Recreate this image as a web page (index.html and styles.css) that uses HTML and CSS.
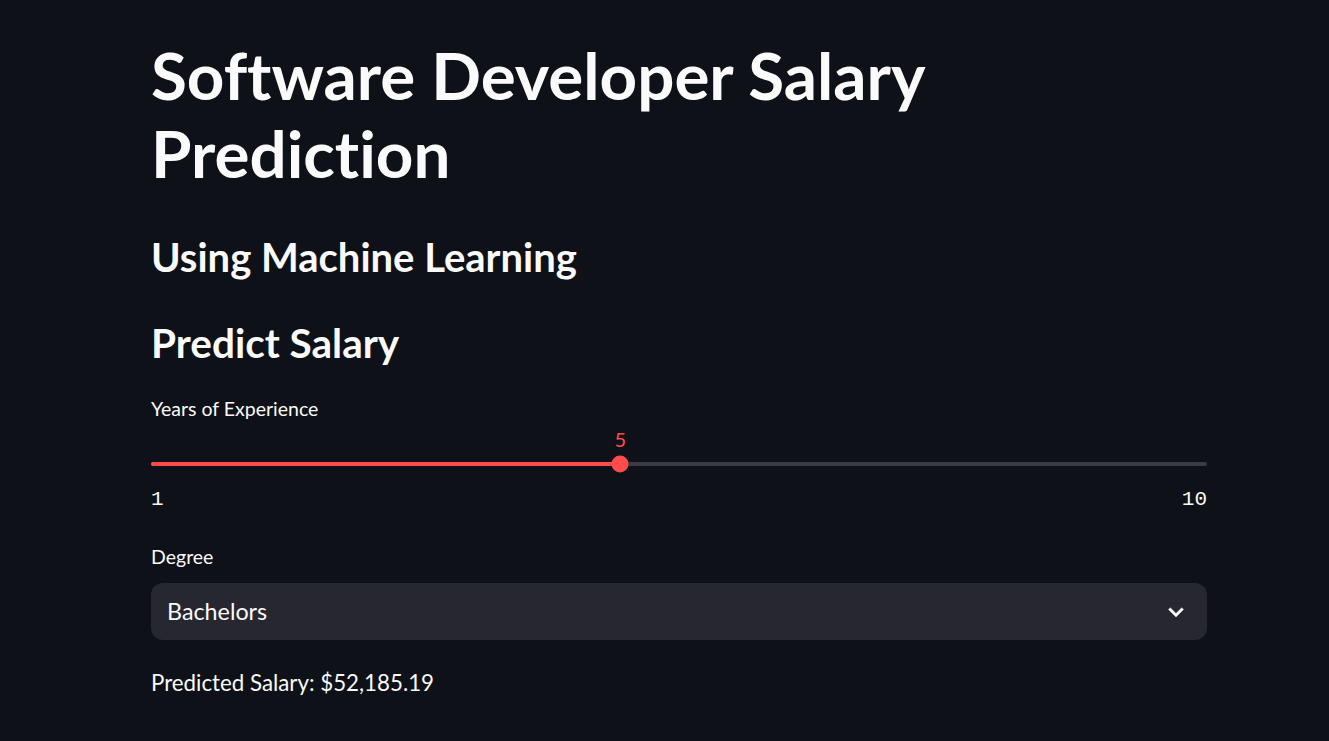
FILE: index.html
```html
<!DOCTYPE html>
<html lang="en">
<head>
<meta charset="utf-8">
<title>Software Developer Salary Prediction</title>
<link rel="stylesheet" href="styles.css">
</head>
<body>
<main class="main">
  <h1 class="title">Software Developer Salary<br>Prediction</h1>
  <h3 class="subtitle">Using Machine Learning</h3>
  <h3 class="section">Predict Salary</h3>

  <div class="widget-label">Years of Experience</div>
  <div class="slider">
    <div class="slider-value-row">
      <span class="slider-value" style="left: 44.444%">5</span>
    </div>
    <div class="slider-track-wrap">
      <div class="slider-track">
        <div class="slider-fill" style="width: 44.444%"></div>
      </div>
      <div class="slider-thumb" style="left: 44.444%"></div>
    </div>
    <div class="slider-ticks">
      <span>1</span>
      <span>10</span>
    </div>
  </div>

  <div class="widget-label degree-label">Degree</div>
  <div class="select">
    <span class="select-value">Bachelors</span>
    <svg class="select-chevron" viewBox="0 0 24 24" width="30" height="30" aria-hidden="true">
      <path d="M16.59 8.59L12 13.17 7.41 8.59 6 10l6 6 6-6z" fill="#fafafa" stroke="#fafafa" stroke-width="0.35" stroke-linejoin="round"/>
    </svg>
  </div>

  <p class="result">Predicted Salary: $52,185.19</p>
</main>
</body>
</html>
```
FILE: styles.css
```css
html, body {
  margin: 0;
  padding: 0;
  background: #0e1117;
}

body {
  color: #fafafa;
  font-family: Lato, "Noto Sans", sans-serif;
  font-variant-ligatures: none;
}

.main {
  width: 1056px;
  margin-left: 151px;
  padding-top: 36px;
}

.title {
  margin: 0;
  font-size: 65.5px;
  line-height: 78px;
  font-weight: 700;
}

.subtitle,
.section {
  margin: 0;
  font-size: 40px;
  line-height: 54px;
  font-weight: 700;
}

.subtitle {
  margin-top: 38px;
}

.section {
  margin-top: 32px;
  font-size: 40.5px;
}

.widget-label {
  margin-top: 24px;
  font-size: 19.5px;
  line-height: 30px;
}

.slider {
  position: relative;
}

.slider-value-row {
  position: relative;
  height: 30px;
}

.slider-value {
  position: absolute;
  top: 0;
  transform: translateX(-50%);
  color: #ff4b4b;
  font-size: 20px;
  line-height: 30px;
}

.slider-track-wrap {
  position: relative;
  height: 20px;
  display: flex;
  align-items: center;
}

.slider-track {
  width: 100%;
  height: 4px;
  border-radius: 2px;
  background: #3a3c45;
  overflow: hidden;
}

.slider-fill {
  height: 100%;
  background: #ff4b4b;
}

.slider-thumb {
  position: absolute;
  top: 50%;
  width: 17px;
  height: 17px;
  border-radius: 50%;
  background: #ff4b4b;
  transform: translate(-50%, -50%);
}

.slider-ticks {
  margin-top: 11px;
  display: flex;
  justify-content: space-between;
  font-family: "Liberation Mono", "DejaVu Sans Mono", monospace;
  font-size: 21px;
  line-height: 30px;
}

.degree-label {
  margin-top: 27px;
}

.select {
  margin-top: 11px;
  height: 57px;
  background: #262730;
  border-radius: 12px;
  display: flex;
  align-items: center;
  justify-content: space-between;
  padding: 0 16px;
}

.select-value {
  font-size: 23.3px;
  line-height: 57px;
}

.select-chevron {
  display: block;
}

.result {
  margin: 25px 0 0;
  font-size: 22.3px;
  line-height: 36px;
}
```
